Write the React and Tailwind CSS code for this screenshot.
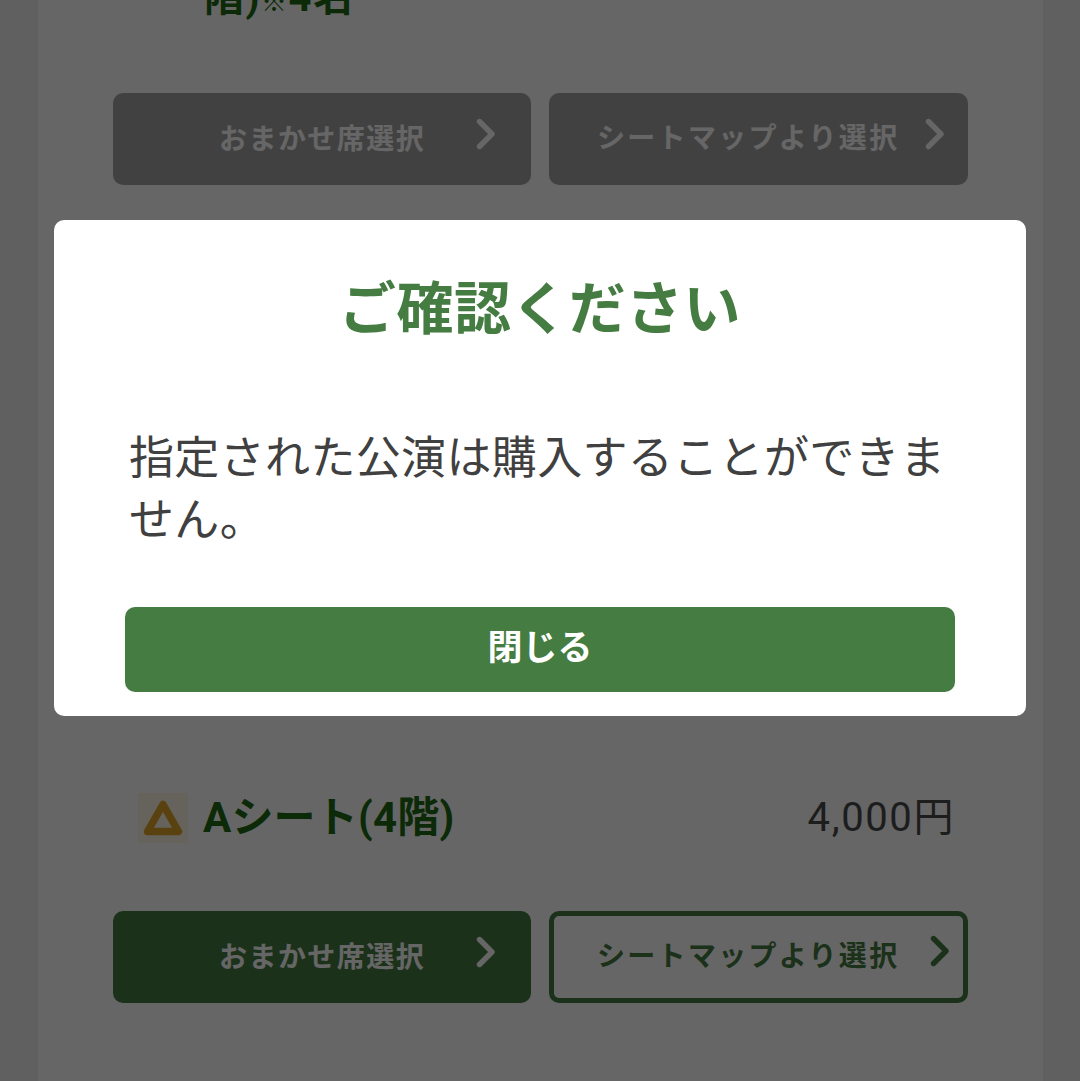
const FONT = "font-['Roboto','Noto_Sans_CJK_JP',sans-serif]";

const Chevron = ({ className }) => (
  <svg viewBox="0 0 20 32" className={className} fill="none" stroke="currentColor" strokeWidth="5.4" strokeLinecap="round" strokeLinejoin="round">
    <path d="M3.5 3.5 L16 16 L3.5 28.5" />
  </svg>
);

const SeatButton = ({ label, disabled, outline, wide }) => {
  let tone = "bg-[#457c41] text-white";
  if (disabled) tone = "bg-[#a4a4a4] text-white";
  if (outline) tone = "bg-white text-[#457c41] border-[5px] border-[#457c41]";
  return (
    <div className={`relative h-[92px] rounded-[10px] ${wide ? "w-[419px]" : "w-[418px]"} ${tone}`}>
      <span
        className={`absolute whitespace-nowrap text-[28px] leading-[46px] font-bold ${
          wide ? "tracking-[2.3px]" : "tracking-[1.45px]"
        } ${outline ? "left-[43px] top-[18px]" : wide ? "left-[48px] top-[23px]" : "left-[106px] top-[24px]"}`}
      >
        {label}
      </span>
      <Chevron
        className={`absolute h-[32px] w-[20px] ${
          outline ? "left-[376px] top-[19px]" : wide ? "left-[376px] top-[25px]" : "left-[363px] top-[25px]"
        }`}
      />
    </div>
  );
};

const TriangleMark = () => (
  <div className="flex h-[50px] w-[50px] items-center justify-center bg-[#fff7e6]">
    <svg viewBox="0 0 40 36" className="h-[36px] w-[40px]" fill="none" stroke="#e0a52a" strokeWidth="7.5" strokeLinejoin="round">
      <path d="M20 4.5 L35.5 31.5 L4.5 31.5 Z" />
    </svg>
  </div>
);

export default function App() {
  return (
    <div className={`relative h-[1081px] w-[1080px] overflow-hidden bg-[#f0f0f0] ${FONT}`}>
      <div className="ml-[38px] flow-root h-full w-[1005px] bg-white px-[75px]">
        <div className="-mt-[22px] h-[40px] whitespace-nowrap pl-[91px] text-[40px] leading-[40px] tracking-[1.5px] font-bold text-[#1e6a14]">
          階)<span className="text-[26px] font-black">※</span>4名
        </div>
        <div className="mt-[75px] flex gap-[18px]">
          <SeatButton label="おまかせ席選択" disabled />
          <SeatButton label="シートマップより選択" disabled wide />
        </div>
        <div className="mt-[608px] flex h-[50px] items-center justify-between pl-[25px] pr-[13px]">
          <div className="flex items-center gap-[15px]">
            <TriangleMark />
            <span className="text-[42px] leading-[50px] tracking-[0.2px] font-bold text-[#1e6a14]">Aシート(4階)</span>
          </div>
          <span className="text-[40px] leading-[50px] tracking-[1.6px] text-[#4a4a4a]">4,000円</span>
        </div>
        <div className="mt-[68px] flex gap-[18px]">
          <SeatButton label="おまかせ席選択" />
          <SeatButton label="シートマップより選択" outline wide />
        </div>
      </div>

      <div className="absolute inset-0 bg-black/60" />

      <div className="absolute left-[54px] top-[220px] h-[496px] w-[972px] rounded-[10px] bg-white px-[71px]">
        <h2 className="mt-[54px] text-center text-[57px] leading-[72px] tracking-[0.4px] font-bold text-[#457c41]">ご確認ください</h2>
        <p className="mt-[82px] pl-[4px] text-[45px] leading-[62px] tracking-[0.35px] text-[#404040]">
          指定された公演は購入することができません。
        </p>
        <button className="mt-[55px] flex h-[85px] w-[830px] items-center justify-center rounded-[10px] bg-[#457c41] text-[35px] font-bold text-white">
          閉じる
        </button>
      </div>
    </div>
  );
}
